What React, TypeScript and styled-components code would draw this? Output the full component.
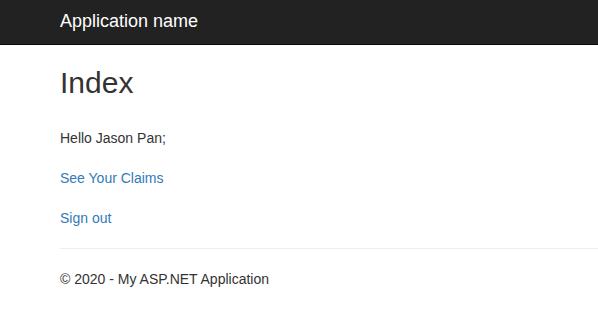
import React from 'react';
import styled, { createGlobalStyle } from 'styled-components';

const GlobalStyle = createGlobalStyle`
  html, body {
    margin: 0;
    padding: 0;
    background: #fff;
  }
  body {
    font-family: "Liberation Sans", Arial, Helvetica, sans-serif;
    font-size: 14px;
    line-height: 20px;
    color: #333;
  }
`;

// Top bar
const Navbar = styled.header`
  height: 44px;
  background: #222;
  border-bottom: 1px solid #080808;
  box-sizing: content-box;
`;

const NavInner = styled.div`
  padding: 11px 0 0 60px;
`;

const Brand = styled.a`
  font-size: 18px;
  line-height: 20px;
  color: #fff;
  text-decoration: none;
`;

// Page body
const Container = styled.main`
  padding-left: 60px;
`;

const Title = styled.h2`
  font-size: 30px;
  font-weight: 400;
  line-height: 33px;
  margin: 21px 0 29px;
  color: #333;
`;

const Paragraph = styled.p`
  margin: 0 0 20px;
`;

const TextLink = styled.a`
  color: #337ab7;
  text-decoration: none;
`;

const Rule = styled.hr`
  margin: 0;
  border: 0;
  border-top: 1px solid #eee;
`;

const Footer = styled.footer`
  padding-top: 20px;
`;

const FooterText = styled.p`
  margin: 0;
`;

const App: React.FC = () => {
  return (
    <>
      <GlobalStyle />
      <Navbar>
        <NavInner>
          <Brand href="#">Application name</Brand>
        </NavInner>
      </Navbar>
      <Container>
        <Title>Index</Title>
        <Paragraph>Hello Jason Pan;</Paragraph>
        <Paragraph>
          <TextLink href="#">See Your Claims</TextLink>
        </Paragraph>
        <Paragraph>
          <TextLink href="#">Sign out</TextLink>
        </Paragraph>
        <Rule />
        <Footer>
          <FooterText>© 2020 - My ASP.NET Application</FooterText>
        </Footer>
      </Container>
    </>
  );
};

export default App;
